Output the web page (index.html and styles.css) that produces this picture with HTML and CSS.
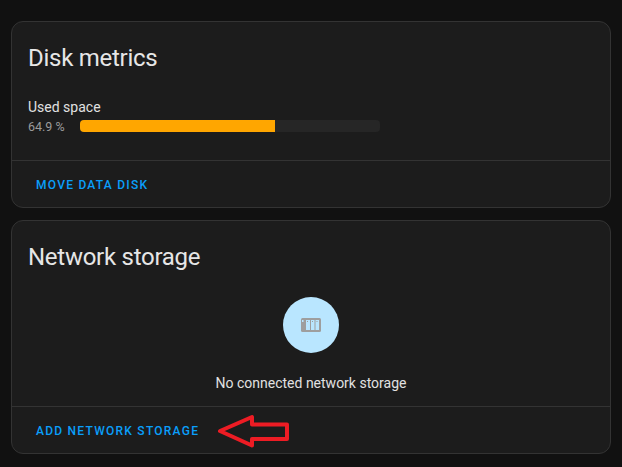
FILE: index.html
```html
<!DOCTYPE html>
<html lang="en">

<head>
    <meta charset="UTF-8" />
    <title>Storage</title>
    <link rel="stylesheet" href="styles.css">
</head>

<body>
    <div class="card card-metrics">
        <div class="card-content">
            <h1>Disk metrics</h1>
            <div class="metric-label">Used space</div>
            <div class="metric-row">
                <span class="metric-value">64.9 %</span>
                <div class="bar">
                    <div class="bar-fill" style="width: 64.9%"></div>
                </div>
            </div>
        </div>
        <div class="card-actions">
            <a class="action">Move data disk</a>
        </div>
    </div>

    <div class="card card-network">
        <div class="card-content">
            <h1>Network storage</h1>
            <div class="empty">
                <div class="empty-icon">
                    <svg width="20" height="14" viewBox="0 0 20 14">
                        <rect width="20" height="14" rx="1.5" fill="#9e9e9e" />
                        <rect x="1" y="2" width="1.5" height="2" fill="#b9e6ff" />
                        <path d="M5 2h4v10H5zM10 2h3.500v10H10zM14.500 2H18v10h-3.500z" fill="#b9e6ff" />
                        <path d="M6 3h1v1H6zM11 3h1v1h-1zM15.500 3h1v1h-1z" fill="#9e9e9e" />
                    </svg>
                </div>
                <p>No connected network storage</p>
            </div>
        </div>
        <div class="card-actions">
            <a class="action">Add network storage</a>
        </div>
    </div>

    <!-- annotation drawn on top of the screenshot -->
    <svg class="arrow" width="80" height="40" viewBox="0 0 80 40">
        <path d="M4 17 L36 3 V10.500 H71 V25 H36 V31.500 Z" fill="none" stroke="#ed1c24" stroke-width="4" stroke-linejoin="round" />
    </svg>
</body>

</html>
```

FILE: styles.css
```css
html,
body {
    height: 100%;
}

body {
    margin: 0;
    padding: 21px 11px 0;
    background: #111111;
    font-family: Roboto, sans-serif;
    color: #e1e1e1;
    box-sizing: border-box;
    overflow: hidden;
    position: relative;
}

.card {
    width: 600px;
    box-sizing: border-box;
    background: #1c1c1c;
    border: 1px solid #333333;
    border-radius: 12px;
    display: flex;
    flex-direction: column;
}

.card-metrics {
    height: 187px;
    margin-bottom: 12px;
}

.card-network {
    height: 234px;
}

.card-content {
    flex: 1;
    padding: 0 16px;
}

h1 {
    margin: 20px 0 0;
    font-size: 24px;
    font-weight: 400;
    line-height: 32px;
    letter-spacing: -0.27px;
    color: #e6e6e6;
}

.metric-label {
    margin-top: 23px;
    font-size: 14px;
    line-height: 20px;
}

.metric-row {
    display: flex;
    align-items: center;
    margin-top: 1px;
}

.metric-value {
    width: 52px;
    font-size: 12.500px;
    line-height: 16px;
    color: #9b9b9b;
    position: relative;
    top: 1px;
}

.bar {
    width: 300px;
    height: 12px;
    background: #262626;
    border-radius: 4px;
    overflow: hidden;
}

.bar-fill {
    height: 100%;
    background: #ffa600;
}

.empty {
    display: flex;
    flex-direction: column;
    align-items: center;
    margin-top: 24px;
}

.empty-icon {
    width: 56px;
    height: 56px;
    border-radius: 50%;
    background: #b9e6ff;
    display: flex;
    align-items: center;
    justify-content: center;
}

.empty p {
    margin: 20px 0 0;
    font-size: 14px;
    line-height: 20px;
}

.card-actions {
    height: 47px;
    box-sizing: border-box;
    border-top: 1px solid #333333;
    padding: 2px 0 0 24px;
    display: flex;
    align-items: center;
}

.action {
    font-size: 12px;
    font-weight: 500;
    letter-spacing: 1.25px;
    text-transform: uppercase;
    color: #0a9ffa;
}

.arrow {
    position: absolute;
    left: 216px;
    top: 414px;
}
```
